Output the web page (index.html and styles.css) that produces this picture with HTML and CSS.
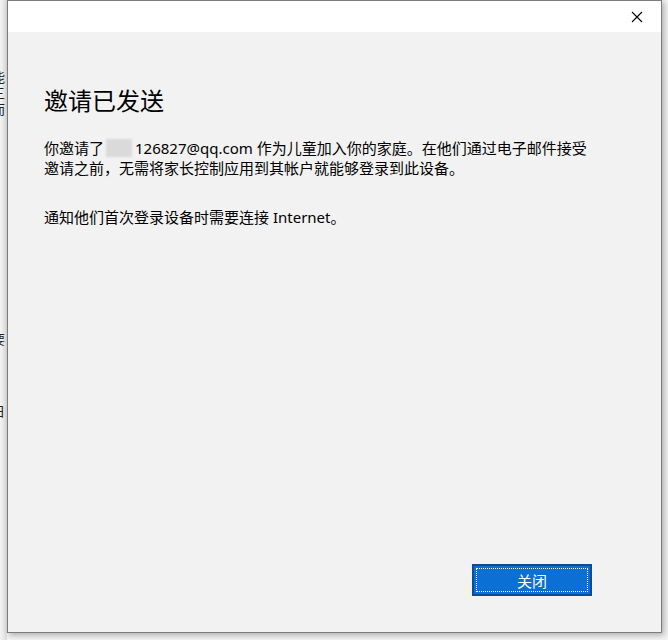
FILE: index.html
```html
<!DOCTYPE html>
<html lang="zh-CN">
<head>
    <meta charset="UTF-8">
    <title>邀请已发送</title>
    <link rel="stylesheet" href="styles.css">
</head>
<body>
    <div class="behind">
        <div class="behind-text">
            <div class="b1">能</div>
            <div>三</div>
            <div>而</div>
            <div class="b2">要</div>
            <div class="b3">日</div>
        </div>
    </div>

    <div class="dialog">
        <div class="titlebar">
            <button class="close" aria-label="关闭">
                <svg width="12" height="12" viewBox="0 0 12 12">
                    <path d="M1 1 L11 11 M11 1 L1 11" stroke="#000" stroke-width="1.1" fill="none"/>
                </svg>
            </button>
        </div>
        <div class="content">
            <h1>邀请已发送</h1>
            <p>你邀请了<span class="hidden-name"></span>126827@qq.com 作为儿童加入你的家庭。在他们通过电子邮件接受邀请之前，无需将家长控制应用到其帐户就能够登录到此设备。</p>
            <p class="note">通知他们首次登录设备时需要连接 Internet。</p>
            <div class="actions">
                <button class="primary"><span class="focus">关闭</span></button>
            </div>
        </div>
    </div>
</body>
</html>
```

FILE: styles.css
```css
body {
    margin: 0;
    padding: 0;
    background-color: #f3f3f3;
    font-family: "Noto Sans", "Noto Sans CJK SC", sans-serif;
    color: #000;
    display: flex;
    height: 640px;
    overflow: hidden;
}

.behind {
    width: 7px;
    flex: none;
    overflow: hidden;
    background: linear-gradient(to right, #f4f4f4, #dcdcdc);
}
.behind-text {
    margin-left: -8px;
    font-size: 13px;
    line-height: 16px;
    color: #222;
}
.behind-text .b1 { margin-top: 69px; }
.behind-text .b2 { margin-top: 214px; }
.behind-text .b3 { margin-top: 56px; }

.dialog {
    width: 653px;
    height: 631px;
    border: 1px solid #7c7c7c;
    background-color: #f2f2f2;
    box-shadow: 2px 2px 6px rgba(0, 0, 0, 0.3);
    display: flex;
    flex-direction: column;
    flex: none;
}

.titlebar {
    height: 31px;
    background-color: #fff;
    display: flex;
    justify-content: flex-end;
    align-items: center;
}
.close {
    background: none;
    border: none;
    padding: 0;
    width: 46px;
    height: 31px;
    display: flex;
    align-items: center;
    justify-content: center;
    margin-right: 1px;
}

.content {
    flex: 1;
    padding: 53px 69px 36px 36px;
    display: flex;
    flex-direction: column;
}

h1 {
    font-size: 24px;
    font-weight: 400;
    line-height: 32px;
    margin: 0 0 21px 0;
}

p {
    font-size: 15px;
    line-height: 20px;
    margin: 0;
}
.note {
    margin-top: 29px;
}

.hidden-name {
    display: inline-block;
    width: 26px;
    height: 18px;
    margin: 0 3px -3px 2px;
    background-color: #dadada;
    filter: blur(1px);
}

.actions {
    margin-top: auto;
    display: flex;
    justify-content: flex-end;
}
.primary {
    width: 120px;
    height: 32px;
    background-color: #0b6fd3;
    border: 2px solid #0c4c93;
    padding: 2px;
    color: #fff;
    font-family: "Noto Sans CJK SC", sans-serif;
    font-size: 15px;
    display: flex;
}
.focus {
    flex: 1;
    border: 1px dotted #fff;
    display: flex;
    align-items: center;
    justify-content: center;
}
```
